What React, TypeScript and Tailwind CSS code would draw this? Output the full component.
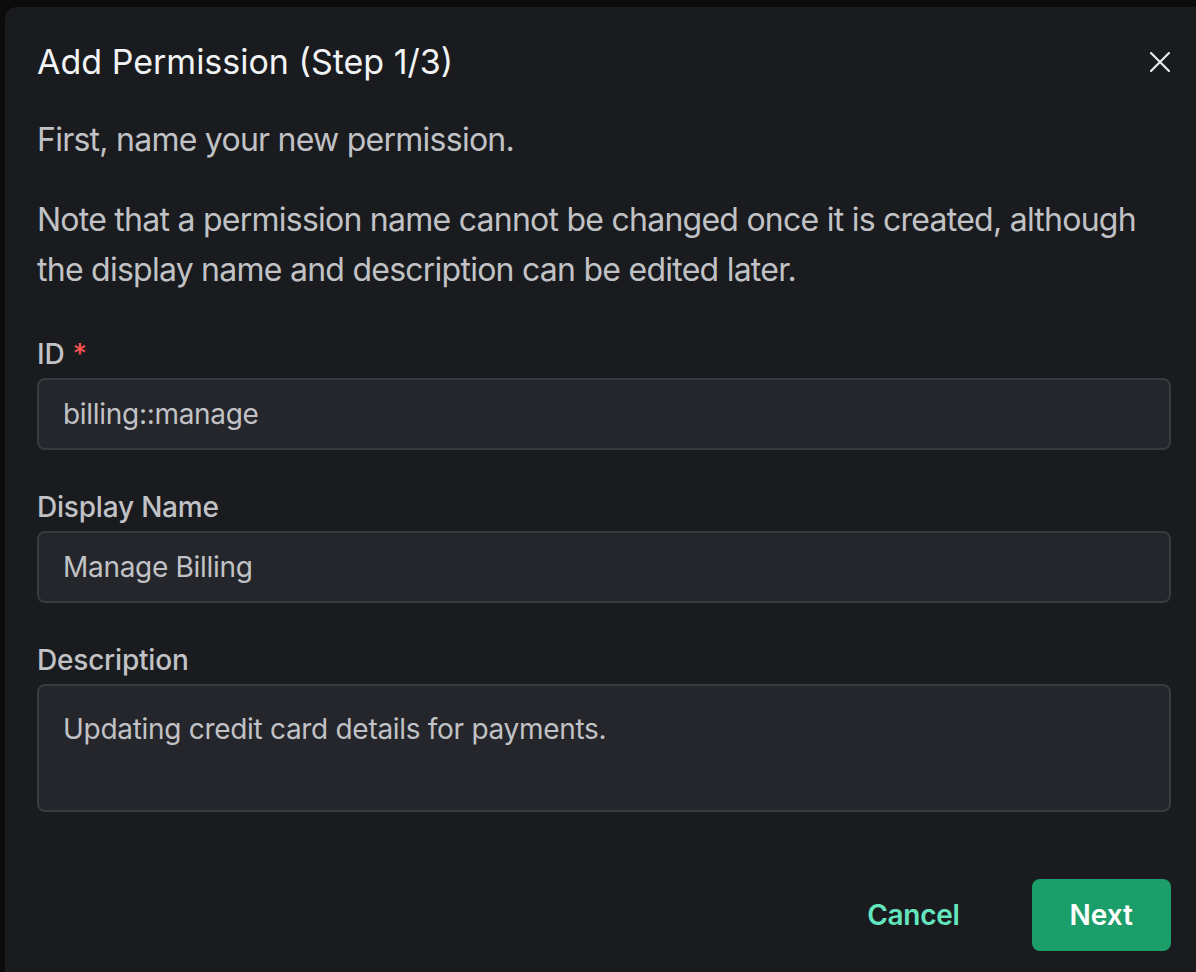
import React from "react";

const FONT = { fontFamily: "Inter, 'Noto Sans', sans-serif" };

function Label({ children, required }: { children: React.ReactNode; required?: boolean }) {
  return (
    <div className="mb-[2px] text-[28px] leading-[43px] font-medium tracking-[-0.2px] text-[#c1c2c5]">
      {children}
      {required && <span className="ml-[8px] text-[#fa5252]">*</span>}
    </div>
  );
}

function Input({ value }: { value: string }) {
  return (
    <div className="flex h-[72px] items-center rounded-[8px] border-2 border-[#373a40] bg-[#25262b] px-[24px] text-[28px] tracking-[-0.3px] text-[#c1c2c5]">
      {value}
    </div>
  );
}

export default function App() {
  return (
    <div className="relative h-[972px] w-full overflow-hidden bg-[#0b0b0c]" style={FONT}>
      <div className="ml-[5px] mt-[7px] h-[1000px] w-[1198px] rounded-tl-[12px] bg-[#1a1b1e] px-[32px] pt-[30px]">
        <div className="flex items-center justify-between">
          <h2 className="text-[34px] leading-[50px] font-normal text-[#f1f3f5]">Add Permission (Step 1/3)</h2>
          <button className="flex h-[22px] w-[22px] items-center justify-center text-[#e9ecef]">
            <svg width="20" height="20" viewBox="0 0 20 20" fill="none" stroke="currentColor" strokeWidth="2.2" strokeLinecap="round">
              <path d="M1 1L19 19M19 1L1 19" />
            </svg>
          </button>
        </div>

        <p className="mt-[28px] text-[32px] leading-[50px] tracking-[-0.75px] text-[#c1c2c5]">First, name your new permission.</p>
        <p className="mt-[30px] text-[32px] leading-[50px] tracking-[-0.75px] text-[#c1c2c5]">
          Note that a permission name cannot be changed once it is created, although the display name and description can
          be edited later.
        </p>

        <div className="mt-[38px]">
          <Label required>ID</Label>
          <Input value="billing::manage" />
        </div>

        <div className="mt-[36px]">
          <Label>Display Name</Label>
          <Input value="Manage Billing" />
        </div>

        <div className="mt-[36px]">
          <Label>Description</Label>
          <div className="h-[128px] rounded-[8px] border-2 border-[#373a40] bg-[#25262b] px-[24px] pt-[22px] text-[28px] leading-[43px] tracking-[-0.3px] text-[#c1c2c5]">
            Updating credit card details for payments.
          </div>
        </div>

        <div className="mt-[67px] flex justify-end gap-[36px]">
          <button className="h-[72px] rounded-[8px] px-[36px] text-[28px] font-semibold tracking-[-0.3px] text-[#63e6be]">Cancel</button>
          <button className="h-[72px] rounded-[8px] bg-[#1b9e69] px-[38px] text-[28px] font-semibold text-white">Next</button>
        </div>
      </div>
    </div>
  );
}
